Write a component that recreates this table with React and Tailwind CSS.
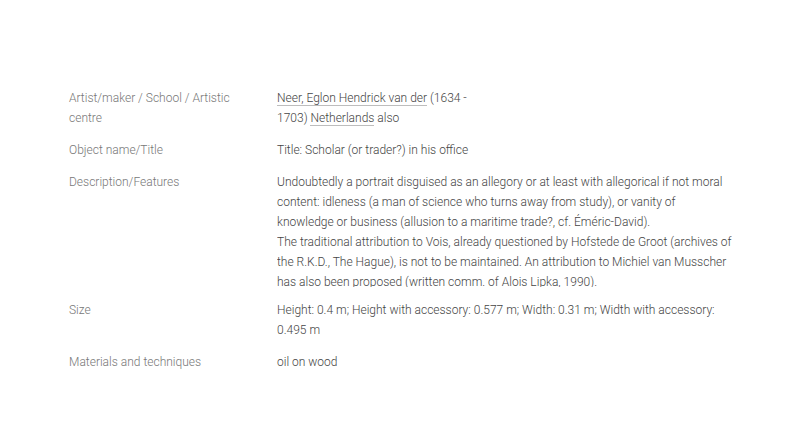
import React from "react";

const rows = [
  {
    label: "Artist/maker / School / Artistic centre",
    narrow: true,
    value: (
      <>
        <a className="border-b border-[#bdbdbd] text-[#444]">Neer, Eglon Hendrick van der</a> (1634 - 1703){" "}
        <a className="border-b border-[#bdbdbd] text-[#444]">Netherlands</a> also
      </>
    ),
  },
  { label: "Object name/Title", value: "Title: Scholar (or trader?) in his office" },
  {
    label: "Description/Features",
    clip: true,
    value: (
      <>
        Undoubtedly a portrait disguised as an allegory or at least with allegorical if not moral content: idleness (a man of science who turns away from study), or vanity of knowledge or business (allusion to a maritime trade?, cf. Éméric-David).
        <br />
        The traditional attribution to Vois, already questioned by Hofstede de Groot (archives of the R.K.D., The Hague), is not to be maintained. An attribution to Michiel van Musscher has also been proposed (written comm. of Alois Lipka, 1990).
      </>
    ),
  },
  {
    label: "Size",
    value: "Height: 0.4 m; Height with accessory: 0.577 m; Width: 0.31 m; Width with accessory: 0.495 m",
  },
  { label: "Materials and techniques", value: "oil on wood" },
];

const App = () => {
  return (
    <div className="w-[800px] h-[435px] bg-white font-['Roboto',sans-serif] font-light text-[12px] leading-[20px]">
      <div className="pt-[88px] pl-[69px] flex flex-col gap-[12px]">
        {rows.map((row, i) => (
          <div key={i} className="flex">
            <div className="w-[208px] shrink-0 pr-[40px] text-[#777]">{row.label}</div>
            <div
              className={
                "text-[#444] " +
                (row.narrow ? "w-[196px] " : "w-[455px] ") +
                (row.clip ? "h-[115px] mb-[1px] overflow-hidden" : "")
              }
            >
              {row.value}
            </div>
          </div>
        ))}
      </div>
    </div>
  );
};

export default App;
